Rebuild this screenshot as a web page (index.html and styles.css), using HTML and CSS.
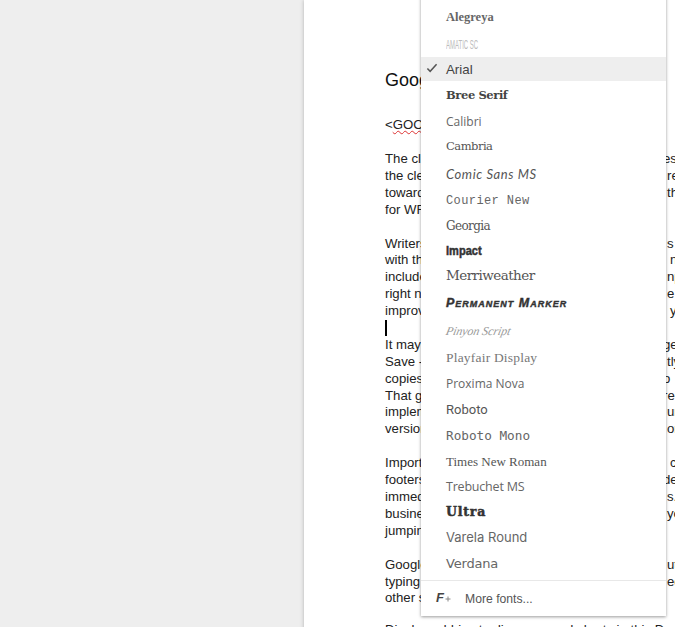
FILE: index.html
```html
<!DOCTYPE html>
<html lang="en">
<head>
<meta charset="utf-8">
<title>Font menu</title>
<link rel="stylesheet" href="styles.css">
</head>
<body>
<main class="page">
  <h1 class="title">Google</h1>
  <p class="tag">&lt;<span class="misspelt">GOOGLE</span></p>
  <div class="para">
    <div class="line"><span class="l">The cle</span><span class="r cut">es</span></div>
    <div class="line"><span class="l">the cle</span><span class="r">re</span></div>
    <div class="line"><span class="l">toward</span><span class="r">th</span></div>
    <div class="line"><span class="l">for WF</span></div>
  </div>
  <div class="para">
    <div class="line"><span class="l">Writers</span><span class="r">s</span></div>
    <div class="line"><span class="l">with th</span><span class="r gap">n</span></div>
    <div class="line"><span class="l">include</span><span class="r">np</span></div>
    <div class="line"><span class="l">right n</span><span class="r">e (</span></div>
    <div class="line"><span class="l">improv</span><span class="r gap">y</span></div>
    <div class="line"><span class="caret"></span></div>
    <div class="line"><span class="l">It may</span><span class="r cut">ge</span></div>
    <div class="line"><span class="l">Save -</span><span class="r">tly</span></div>
    <div class="line"><span class="l">copies</span><span class="r cut">o</span></div>
    <div class="line"><span class="l">That g</span><span class="r cut">re</span></div>
    <div class="line"><span class="l">implem</span><span class="r">ur</span></div>
    <div class="line"><span class="l">version</span><span class="r">on</span></div>
  </div>
  <div class="para">
    <div class="line"><span class="l">Import</span><span class="r gap">c</span></div>
    <div class="line"><span class="l">footers</span><span class="r cut">de</span></div>
    <div class="line"><span class="l">immed</span><span class="r">s.</span></div>
    <div class="line"><span class="l">busine</span><span class="r">yo</span></div>
    <div class="line"><span class="l">jumpin</span></div>
  </div>
  <div class="para">
    <div class="line"><span class="l">Google</span><span class="r">ut</span></div>
    <div class="line"><span class="l">typing</span><span class="r">ed</span></div>
    <div class="line"><span class="l">other s</span></div>
  </div>
  <div class="para last">
    <div class="line"><span class="l">Display add-ins to diagrams and charts in this Docs and</span></div>
  </div>
</main>

<nav class="menu">
  <ul class="fonts">
    <li class="item h28"><span class="f-alegreya">Alegreya</span></li>
    <li class="item h26"><span class="f-amatic">Amatic SC</span></li>
    <li class="item h24 selected">
      <svg class="check" viewBox="0 0 14 12" aria-hidden="true"><path d="M1.5 6.5 4.8 10 12.5 1.5"/></svg>
      <span class="f-arial">Arial</span>
    </li>
    <li class="item h28"><span class="f-bree">Bree Serif</span></li>
    <li class="item h24"><span class="f-calibri">Calibri</span></li>
    <li class="item h26"><span class="f-cambria">Cambria</span></li>
    <li class="item h29"><span class="f-comic">Comic Sans MS</span></li>
    <li class="item h24"><span class="f-courier">Courier New</span></li>
    <li class="item h26"><span class="f-georgia">Georgia</span></li>
    <li class="item h24"><span class="f-impact">Impact</span></li>
    <li class="item h26"><span class="f-merri">Merriweather</span></li>
    <li class="item h29"><span class="f-marker">Permanent Marker</span></li>
    <li class="item h28"><span class="f-pinyon">Pinyon Script</span></li>
    <li class="item h26"><span class="f-playfair">Playfair Display</span></li>
    <li class="item h25"><span class="f-proxima">Proxima Nova</span></li>
    <li class="item h26"><span class="f-roboto">Roboto</span></li>
    <li class="item h27"><span class="f-mono">Roboto Mono</span></li>
    <li class="item h25"><span class="f-times">Times New Roman</span></li>
    <li class="item h24"><span class="f-trebuchet">Trebuchet MS</span></li>
    <li class="item h26"><span class="f-ultra">Ultra</span></li>
    <li class="item h26"><span class="f-varela">Varela Round</span></li>
    <li class="item h26"><span class="f-verdana">Verdana</span></li>
  </ul>
  <div class="more">
    <span class="more-icon">F<svg class="plus" viewBox="0 0 6 6" aria-hidden="true"><path d="M3 .5v5M.5 3h5"/></svg></span>
    <span class="more-label">More fonts...</span>
  </div>
</nav>
</body>
</html>
```
FILE: styles.css
```css
* { box-sizing: border-box; }
html, body { margin: 0; height: 627px; overflow: hidden; }
body {
  position: relative;
  background: #eeeeee;
  font-family: "Liberation Sans", Arial, sans-serif;
  color: #111;
}
.page {
  margin-left: 304px;
  height: 800px;
  background: #fff;
  box-shadow: 0 0 4px rgba(0, 0, 0, .25);
  padding: 70px 0 0 81px;
}
.title { margin: 0; font-size: 18px; font-weight: 400; line-height: 21px; height: 46px; }
.tag { margin: 0 0 18px; font-size: 13.2px; line-height: 17px; height: 17px; color: #222; }
.misspelt { text-decoration: underline wavy #d33; text-decoration-thickness: 1px; }
.para { font-size: 13.2px; line-height: 16.9px; margin-bottom: 17px; color: #222; }
.last { margin-top: -2px; }
.line { display: flex; height: 16.9px; white-space: nowrap; }
.l { flex: none; width: 282px; }
.r { flex: none; }
.cut { margin-left: -4px; }
.gap { margin-left: 3px; }
.caret { width: 2px; height: 16px; background: #000; }

.menu {
  position: absolute;
  left: 421px;
  top: -10px;
  width: 245px;
  height: 626px;
  background: #fff;
  box-shadow: 0 1px 3px rgba(0, 0, 0, .4);
  padding-top: 13px;
  color: #555;
}
.fonts { list-style: none; margin: 0; padding: 0; }
.item { display: flex; align-items: center; padding-left: 25px; position: relative; white-space: nowrap; }
.h24 { height: 24px; }
.h25 { height: 25px; }
.h26 { height: 26px; }
.h27 { height: 27px; }
.h28 { height: 28px; }
.h29 { height: 29px; }
.selected { background: #eeeeee; }
.check { position: absolute; left: 5px; top: 6px; width: 12px; height: 10px; fill: none; stroke: #555; stroke-width: 1.8; }

.f-alegreya { font: 700 12.5px "Liberation Serif", serif; color: #666; }
.f-amatic { font: 13px "Liberation Sans", sans-serif; text-transform: uppercase; color: #bcbcbc; display: inline-block; transform: scaleX(.46); transform-origin: left center; }
.f-arial { font: 13.3px "Liberation Sans", sans-serif; color: #444; }
.f-bree { font: 700 11.5px "DejaVu Serif", serif; color: #444; letter-spacing: -.4px; }
.f-calibri { font: 12px "Open Sans", sans-serif; color: #666; }
.f-cambria { font: 11.5px "DejaVu Serif", serif; color: #555; letter-spacing: -.5px; }
.f-comic { font: italic 13px "Lato", sans-serif; color: #555; letter-spacing: .6px; }
.f-courier { font: 12px "Liberation Mono", monospace; color: #666; letter-spacing: .4px; padding-top: 2px; }
.f-georgia { font: 12px "DejaVu Serif", serif; color: #555; letter-spacing: -.6px; padding-top: 1px; }
.f-impact { font: 700 13px "Liberation Sans", sans-serif; color: #333; display: inline-block; transform: scaleX(.85); transform-origin: left center; -webkit-text-stroke: .5px #333; }
.f-merri { font: 13.5px "DejaVu Serif", serif; color: #555; letter-spacing: -.55px; }
.f-marker { font: italic 700 12.5px "Liberation Sans", sans-serif; font-variant: small-caps; color: #333; letter-spacing: 1px; -webkit-text-stroke: .4px #333; }
.f-pinyon { font: italic 12px "Liberation Serif", serif; color: #999; letter-spacing: -.1px; display: inline-block; transform: skewX(-12deg); }
.f-playfair { font: 13.5px "Liberation Serif", serif; color: #777; letter-spacing: .2px; }
.f-proxima { font: 12px "Open Sans", sans-serif; color: #666; }
.f-roboto { font: 13px Roboto, sans-serif; color: #555; }
.f-mono { font: 12.7px "DejaVu Sans Mono", monospace; color: #666; }
.f-times { font: 13px "Liberation Serif", serif; color: #555; }
.f-trebuchet { font: 12.5px "Open Sans", sans-serif; color: #666; letter-spacing: -.2px; }
.f-ultra { font: 700 12.5px "DejaVu Serif", serif; color: #333; letter-spacing: .8px; -webkit-text-stroke: .5px #333; }
.f-varela { font: 13px "Inter", sans-serif; color: #666; }
.f-verdana { font: 13px "DejaVu Sans", sans-serif; color: #666; letter-spacing: -.2px; }

.more {
  margin-top: 4px;
  padding-left: 15px;
  border-top: 1px solid #e8e8e8;
  height: 36px;
  display: flex;
  align-items: center;
}
.more-icon { width: 29px; font: italic 700 13px "Liberation Sans", sans-serif; color: #444; display: flex; align-items: baseline; margin-top: -3px; }
.plus { width: 6px; height: 6px; margin-left: 1px; fill: none; stroke: #888; stroke-width: 1; }
.more-label { font-size: 12.2px; color: #555; margin-top: 1px; }
```
